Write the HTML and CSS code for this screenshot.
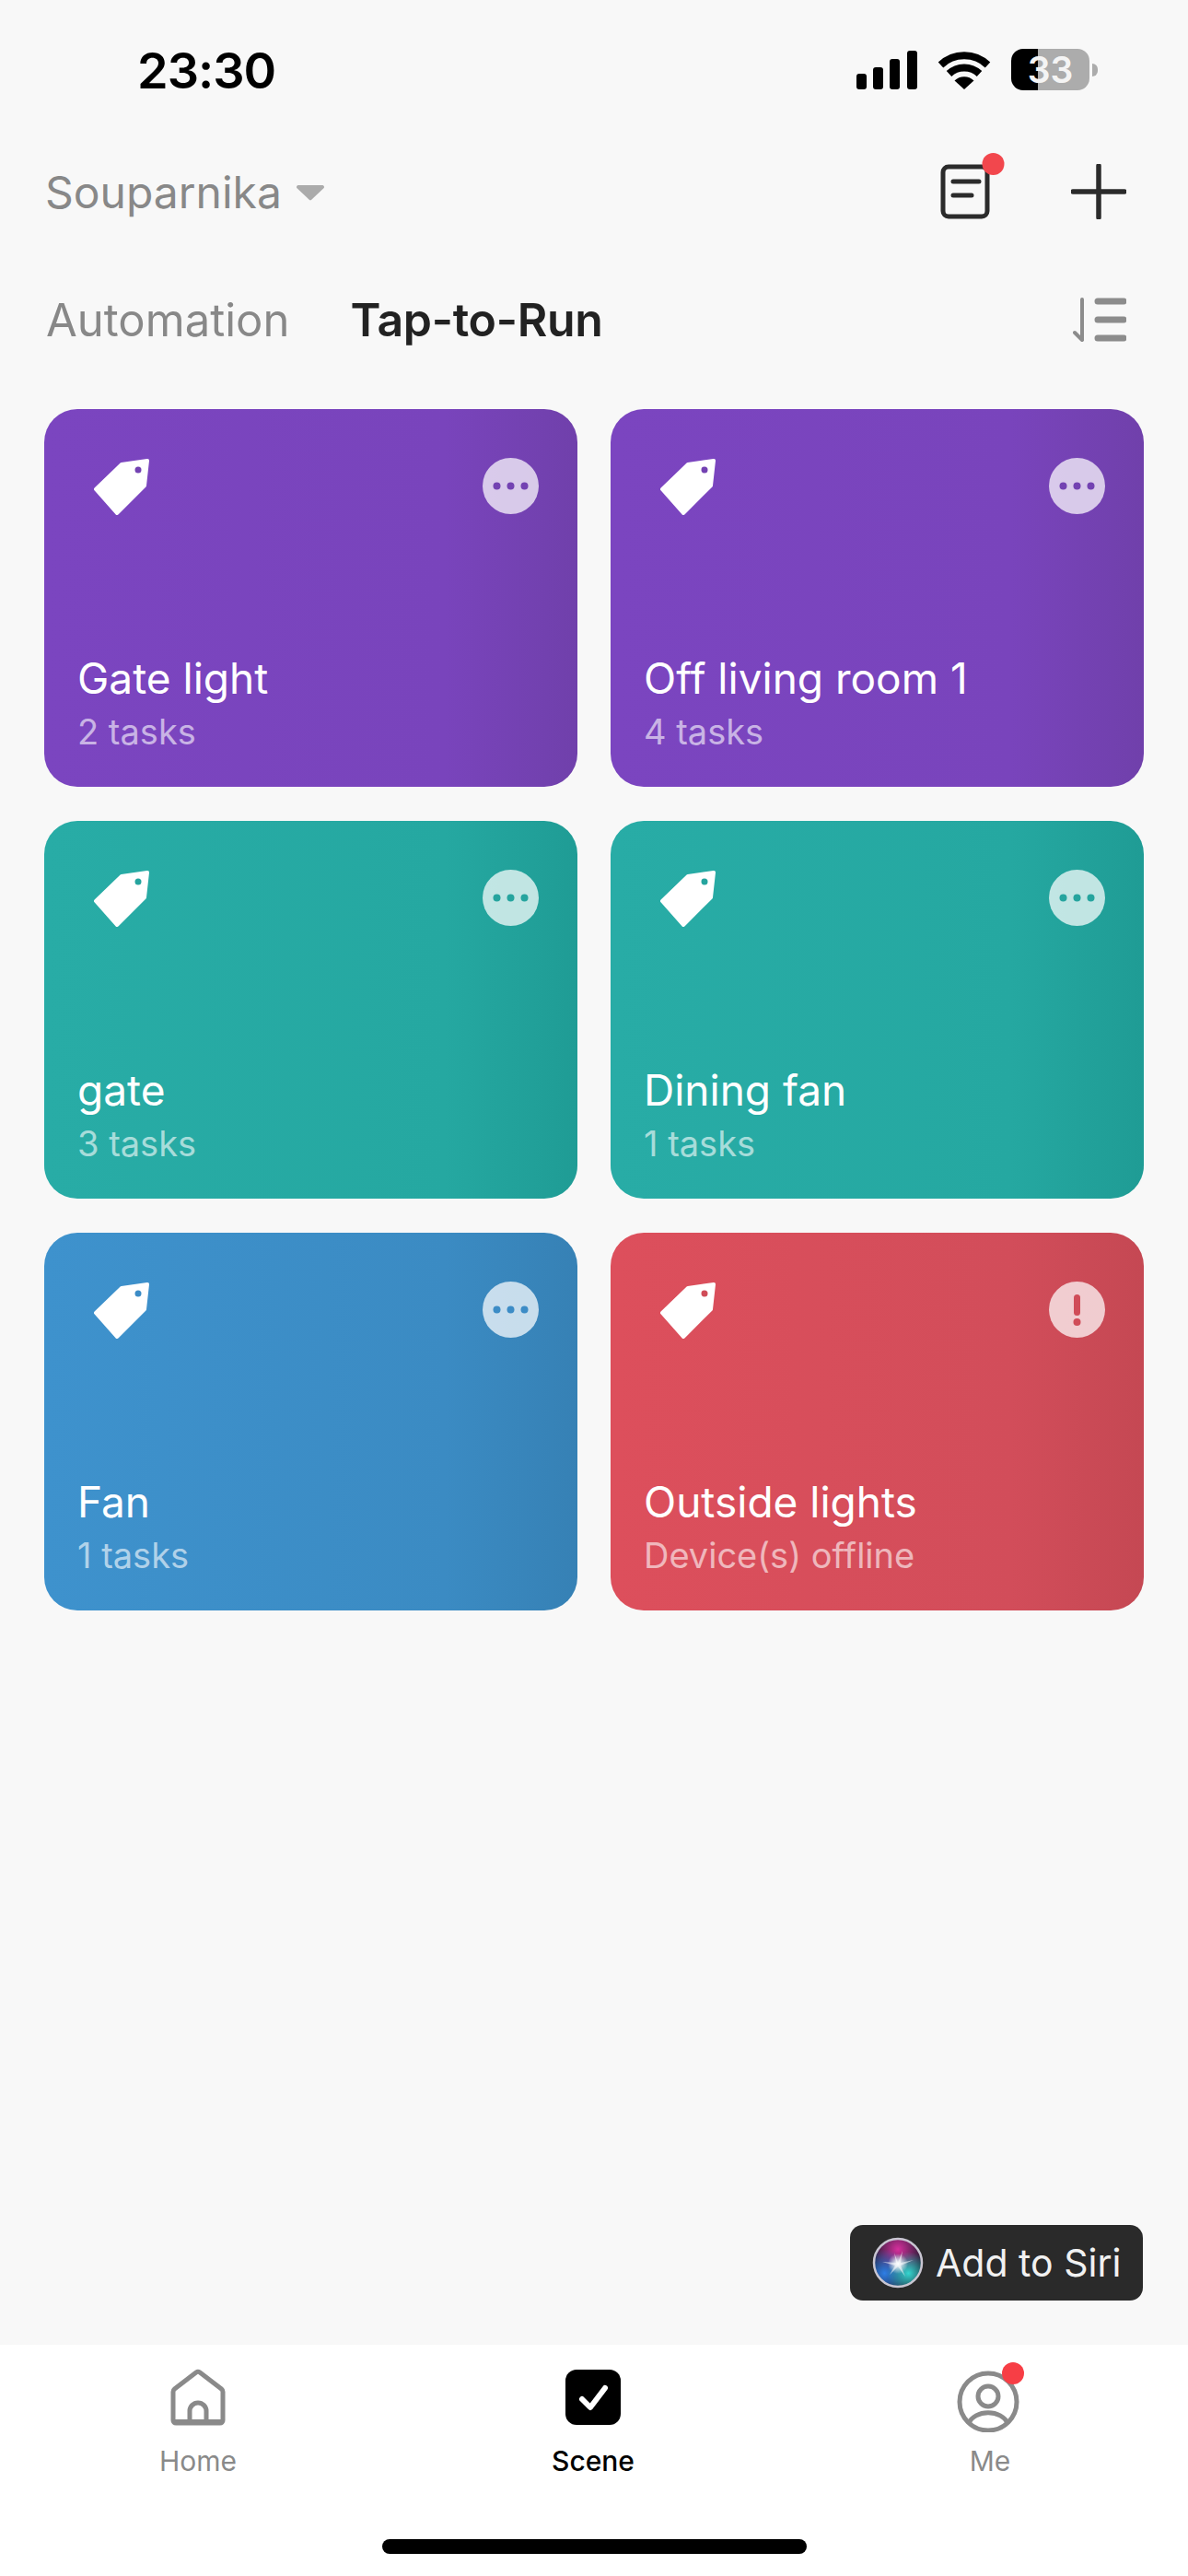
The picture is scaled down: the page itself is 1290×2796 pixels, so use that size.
FILE: index.html
```html
<!DOCTYPE html>
<html lang="en">
<head>
    <meta charset="UTF-8">
    <meta name="viewport" content="width=device-width, initial-scale=1.0">
    <title>Scene</title>
    <link rel="stylesheet" href="styles.css">
</head>
<body>
    <svg class="sprites" width="0" height="0">
        <symbol id="tag" viewBox="0 0 61 62">
            <polygon points="58,3 30,7 2,34 25,60 55,30" fill="#fff" stroke="#fff" stroke-width="4" stroke-linejoin="round"/>
            <circle cx="48" cy="13" r="3.5" fill="currentColor"/>
        </symbol>
        <symbol id="more" viewBox="0 0 61 61">
            <circle cx="30.5" cy="30.5" r="30.5" fill="#fff" fill-opacity="0.72"/>
            <circle cx="15.5" cy="30.5" r="4" fill="currentColor"/>
            <circle cx="30.5" cy="30.5" r="4" fill="currentColor"/>
            <circle cx="45.5" cy="30.5" r="4" fill="currentColor"/>
        </symbol>
        <symbol id="alert" viewBox="0 0 61 61">
            <circle cx="30.5" cy="30.5" r="30.5" fill="#fff" fill-opacity="0.72"/>
            <rect x="27" y="14" width="7" height="23" rx="3.5" fill="currentColor"/>
            <circle cx="30.5" cy="44" r="4" fill="currentColor"/>
        </symbol>
    </svg>

    <div class="screen">
        <div class="status-bar">
            <span class="time">23:30</span>
            <div class="status-icons">
                <svg width="66" height="42" viewBox="0 0 66 42">
                    <rect x="0" y="25" width="11" height="17" rx="3"/>
                    <rect x="18" y="18" width="11" height="24" rx="3"/>
                    <rect x="36" y="9" width="11" height="33" rx="3"/>
                    <rect x="55" y="0" width="11" height="42" rx="3"/>
                </svg>
                <svg width="58" height="42" viewBox="0 0 58 42">
                    <path d="M3.5 15.5A37 37 0 0 1 54.5 15.5" fill="none" stroke="#000" stroke-width="8"/>
                    <path d="M12.5 25A24 24 0 0 1 45.5 25" fill="none" stroke="#000" stroke-width="8"/>
                    <path d="M18.5 32.5A15 15 0 0 1 39.5 32.5L29 42Z"/>
                </svg>
                <div class="battery">
                    <div class="battery-body">33</div>
                    <div class="battery-nub"></div>
                </div>
            </div>
        </div>

        <div class="home-row">
            <div class="home-name">
                <span>Souparnika</span>
                <svg width="32" height="18" viewBox="0 0 32 18">
                    <path d="M3 1h26a2 2 0 0 1 1.500 3.300L17.500 16.500a2 2 0 0 1-3 0L1.500 4.300A2 2 0 0 1 3 1z" fill="#ababab"/>
                </svg>
            </div>
            <div class="home-actions">
                <svg width="70" height="72" viewBox="0 0 70 72">
                    <rect x="3" y="15" width="48" height="54" rx="6" fill="none" stroke="#2b2b2b" stroke-width="5"/>
                    <path d="M14 31h28M14 46h20" stroke="#2b2b2b" stroke-width="5" stroke-linecap="round"/>
                    <circle cx="57.500" cy="12" r="12" fill="#f2474d"/>
                </svg>
                <svg width="60" height="60" viewBox="0 0 60 60">
                    <path d="M30 2v56M2 30h56" stroke="#2b2b2b" stroke-width="5.500" stroke-linecap="round"/>
                </svg>
            </div>
        </div>

        <div class="tabs">
            <span class="tab">Automation</span>
            <span class="tab tab-active">Tap-to-Run</span>
            <svg class="sort-icon" width="58" height="48" viewBox="0 0 58 48">
                <path d="M10 2v44M2 38l8 8" fill="none" stroke="#8c8c8c" stroke-width="4" stroke-linecap="round" stroke-linejoin="round"/>
                <path d="M27 4h28M27 24h28M27 44h28" stroke="#8c8c8c" stroke-width="7" stroke-linecap="round"/>
            </svg>
        </div>

        <main class="scene-grid">
            <div class="scene-card purple">
                <div class="card-top">
                    <svg class="tag-icon"><use href="#tag"/></svg>
                    <svg class="card-action"><use href="#more"/></svg>
                </div>
                <div class="card-title">Gate light</div>
                <div class="card-sub">2 tasks</div>
            </div>
            <div class="scene-card purple">
                <div class="card-top">
                    <svg class="tag-icon"><use href="#tag"/></svg>
                    <svg class="card-action"><use href="#more"/></svg>
                </div>
                <div class="card-title">Off living room 1</div>
                <div class="card-sub">4 tasks</div>
            </div>
            <div class="scene-card teal">
                <div class="card-top">
                    <svg class="tag-icon"><use href="#tag"/></svg>
                    <svg class="card-action"><use href="#more"/></svg>
                </div>
                <div class="card-title">gate</div>
                <div class="card-sub">3 tasks</div>
            </div>
            <div class="scene-card teal">
                <div class="card-top">
                    <svg class="tag-icon"><use href="#tag"/></svg>
                    <svg class="card-action"><use href="#more"/></svg>
                </div>
                <div class="card-title">Dining fan</div>
                <div class="card-sub">1 tasks</div>
            </div>
            <div class="scene-card blue">
                <div class="card-top">
                    <svg class="tag-icon"><use href="#tag"/></svg>
                    <svg class="card-action"><use href="#more"/></svg>
                </div>
                <div class="card-title">Fan</div>
                <div class="card-sub">1 tasks</div>
            </div>
            <div class="scene-card red">
                <div class="card-top">
                    <svg class="tag-icon"><use href="#tag"/></svg>
                    <svg class="card-action"><use href="#alert"/></svg>
                </div>
                <div class="card-title">Outside lights</div>
                <div class="card-sub">Device(s) offline</div>
            </div>
        </main>

        <button class="siri-button" type="button">
            <svg width="56" height="56" viewBox="0 0 56 56">
                <defs>
                    <radialGradient id="siri-pink" cx="50%" cy="22%" r="55%">
                        <stop offset="0" stop-color="#d52f9c"/>
                        <stop offset="1" stop-color="#d52f9c" stop-opacity="0"/>
                    </radialGradient>
                    <radialGradient id="siri-blue" cx="22%" cy="72%" r="50%">
                        <stop offset="0" stop-color="#2f7fe6"/>
                        <stop offset="1" stop-color="#2f7fe6" stop-opacity="0"/>
                    </radialGradient>
                    <radialGradient id="siri-cyan" cx="72%" cy="72%" r="45%">
                        <stop offset="0" stop-color="#35d6d0"/>
                        <stop offset="1" stop-color="#35d6d0" stop-opacity="0"/>
                    </radialGradient>
                    <radialGradient id="siri-core" cx="50%" cy="50%" r="50%">
                        <stop offset="0" stop-color="#fff"/>
                        <stop offset="0.3" stop-color="#fff" stop-opacity="0.75"/>
                        <stop offset="1" stop-color="#fff" stop-opacity="0"/>
                    </radialGradient>
                </defs>
                <circle cx="28" cy="28" r="26" fill="#1c1a2e"/>
                <circle cx="28" cy="28" r="26" fill="url(#siri-pink)"/>
                <circle cx="28" cy="28" r="26" fill="url(#siri-blue)"/>
                <circle cx="28" cy="28" r="26" fill="url(#siri-cyan)"/>
                <circle cx="28" cy="28" r="26" fill="none" stroke="#c9c6d2" stroke-width="2.500"/>
                <path d="M28 28L33 15 31 28 45 25 31 31 36 43 28 32 19 41 25 31 11 27 26 28 24 17Z" fill="#fff" fill-opacity="0.55"/>
                <circle cx="28" cy="29" r="11" fill="url(#siri-core)"/>
            </svg>
            <span>Add to Siri</span>
        </button>

        <nav class="tab-bar">
            <a class="tab-item" href="#home">
                <svg class="tab-icon" width="62" height="64" viewBox="0 0 62 64">
                    <path d="M7 60h48a3 3 0 0 0 3-3V26a4 4 0 0 0-1.500-3L33 5a3.500 3.500 0 0 0-4 0L5.500 23A4 4 0 0 0 4 26v31a3 3 0 0 0 3 3z" fill="none" stroke="#8a8a8a" stroke-width="5" stroke-linejoin="round"/>
                    <path d="M22 59V47a9 9 0 0 1 18 0v12" fill="none" stroke="#8a8a8a" stroke-width="5"/>
                    <path d="M5 58.500h52" stroke="#8a8a8a" stroke-width="5"/>
                </svg>
                <span>Home</span>
            </a>
            <a class="tab-item tab-item-active" href="#scene">
                <svg class="tab-icon" width="60" height="64" viewBox="0 0 60 64">
                    <rect x="0" y="2" width="60" height="60" rx="12" fill="#000"/>
                    <path d="M18 34l9 9 16-21" fill="none" stroke="#fff" stroke-width="6" stroke-linecap="round" stroke-linejoin="round"/>
                </svg>
                <span>Scene</span>
            </a>
            <a class="tab-item" href="#me">
                <svg class="tab-icon" width="74" height="76" viewBox="0 0 74 76">
                    <circle cx="35" cy="43" r="31" fill="none" stroke="#8a8a8a" stroke-width="5"/>
                    <circle cx="35" cy="37" r="11" fill="none" stroke="#8a8a8a" stroke-width="5"/>
                    <path d="M14 66a22 16 0 0 1 42 0" fill="none" stroke="#8a8a8a" stroke-width="5"/>
                    <circle cx="62" cy="12" r="12" fill="#f73e45"/>
                </svg>
                <span>Me</span>
            </a>
        </nav>

        <div class="home-indicator-row">
            <div class="home-indicator"></div>
        </div>
    </div>
</body>
</html>
```

FILE: styles.css
```css
* {
    box-sizing: border-box;
}
body {
    margin: 0;
    font-family: Inter, "Liberation Sans", sans-serif;
    background-color: #f8f8f8;
    color: #222;
}
.sprites {
    display: block;
    height: 0;
}
.screen {
    display: flex;
    flex-direction: column;
    width: 1290px;
    height: 2796px;
    overflow: hidden;
}

/* status bar */
.status-bar {
    display: flex;
    justify-content: space-between;
    align-items: flex-end;
    height: 100px;
    padding: 0 98px 0 149px;
}
.time {
    margin-bottom: -10px;
    font-size: 54px;
    line-height: 66px;
    font-weight: 600;
    letter-spacing: -1px;
    color: #000;
}
.status-icons {
    display: flex;
    align-items: center;
    gap: 22px;
    padding-bottom: 2px;
}
.battery {
    display: flex;
    align-items: center;
    gap: 3px;
}
.battery-body {
    width: 85px;
    height: 45px;
    border-radius: 13px;
    background: linear-gradient(90deg, #000 34%, #acacac 34%);
    color: #f4f4f4;
    font-size: 39px;
    line-height: 45px;
    font-weight: 600;
    text-align: center;
}
.battery-nub {
    width: 6px;
    height: 14px;
    border-radius: 0 7px 7px 0;
    background-color: #acacac;
}

/* home name and actions */
.home-row {
    display: flex;
    justify-content: space-between;
    align-items: center;
    height: 72px;
    margin-top: 66px;
    padding: 0 67px 0 49px;
}
.home-name {
    display: flex;
    align-items: center;
    gap: 15px;
    padding-top: 12px;
    font-size: 48px;
    color: #888;
}
.home-name svg {
    margin-top: 2px;
}
.home-actions {
    display: flex;
    align-items: flex-end;
    gap: 72px;
}

/* tabs */
.tabs {
    display: flex;
    align-items: center;
    height: 48px;
    margin-top: 85px;
    padding: 0 67px 0 50px;
    font-size: 49px;
}
.tab {
    color: #888;
    margin-right: 66px;
}
.tab-active {
    color: #222;
    font-size: 50px;
    font-weight: 600;
    letter-spacing: -0.3px;
}
.sort-icon {
    margin-left: auto;
}

/* scene cards */
.scene-grid {
    display: grid;
    grid-template-columns: 579px 579px;
    grid-auto-rows: 410px;
    column-gap: 36px;
    row-gap: 37px;
    margin-top: 73px;
    padding-left: 48px;
    flex: 1;
}
.scene-card {
    display: flex;
    flex-direction: column;
    padding: 0 0 38px 36px;
    border-radius: 36px;
    color: #fff;
}
.purple {
    background: linear-gradient(90deg, #7b45c0, #7944bc 75%, #7040ab);
}
.teal {
    background: linear-gradient(90deg, #28aca6, #25a8a1 75%, #1f9c95);
}
.blue {
    background: linear-gradient(90deg, #3e92cd, #3b8bc3 75%, #3681b5);
}
.red {
    background: linear-gradient(90deg, #dd4f5c, #d24d5a 75%, #c54853);
}
.purple svg {
    color: #7342b2;
}
.teal svg {
    color: #25a49e;
}
.blue svg {
    color: #3c8cc6;
}
.red svg {
    color: #d04c58;
}
.card-top {
    display: flex;
    justify-content: space-between;
    padding: 53px 42px 0 18px;
    margin-bottom: auto;
}
.tag-icon {
    width: 61px;
    height: 62px;
}
.card-action {
    width: 61px;
    height: 61px;
}
.card-title {
    font-size: 46px;
    line-height: 54px;
}
.card-sub {
    margin-top: 9px;
    font-size: 38px;
    line-height: 44px;
    color: rgba(255, 255, 255, 0.6);
}

/* add to siri */
.siri-button {
    display: flex;
    align-items: center;
    gap: 13px;
    align-self: flex-end;
    width: 318px;
    height: 82px;
    margin: 0 49px 48px 0;
    padding: 0 0 0 24px;
    border: none;
    border-radius: 14px;
    background-color: #2a2a2a;
    color: #f1f1f1;
    font-family: inherit;
    font-size: 41px;
}

/* bottom tabs */
.tab-bar {
    display: grid;
    grid-template-columns: repeat(3, 1fr);
    height: 203px;
    padding-top: 19px;
    background-color: #fff;
}
.tab-item {
    display: flex;
    flex-direction: column;
    align-items: center;
    color: #8a8a8a;
    font-size: 30px;
    line-height: 36px;
    text-decoration: none;
}
.tab-item-active {
    padding-right: 2px;
    color: #000;
    font-weight: 500;
}
.tab-icon {
    height: 76px;
    margin-bottom: 13px;
}
.home-indicator-row {
    display: flex;
    justify-content: center;
    height: 48px;
    padding-top: 8px;
    background-color: #fff;
}
.home-indicator {
    width: 461px;
    height: 16px;
    border-radius: 8px;
    background-color: #000;
}
```
